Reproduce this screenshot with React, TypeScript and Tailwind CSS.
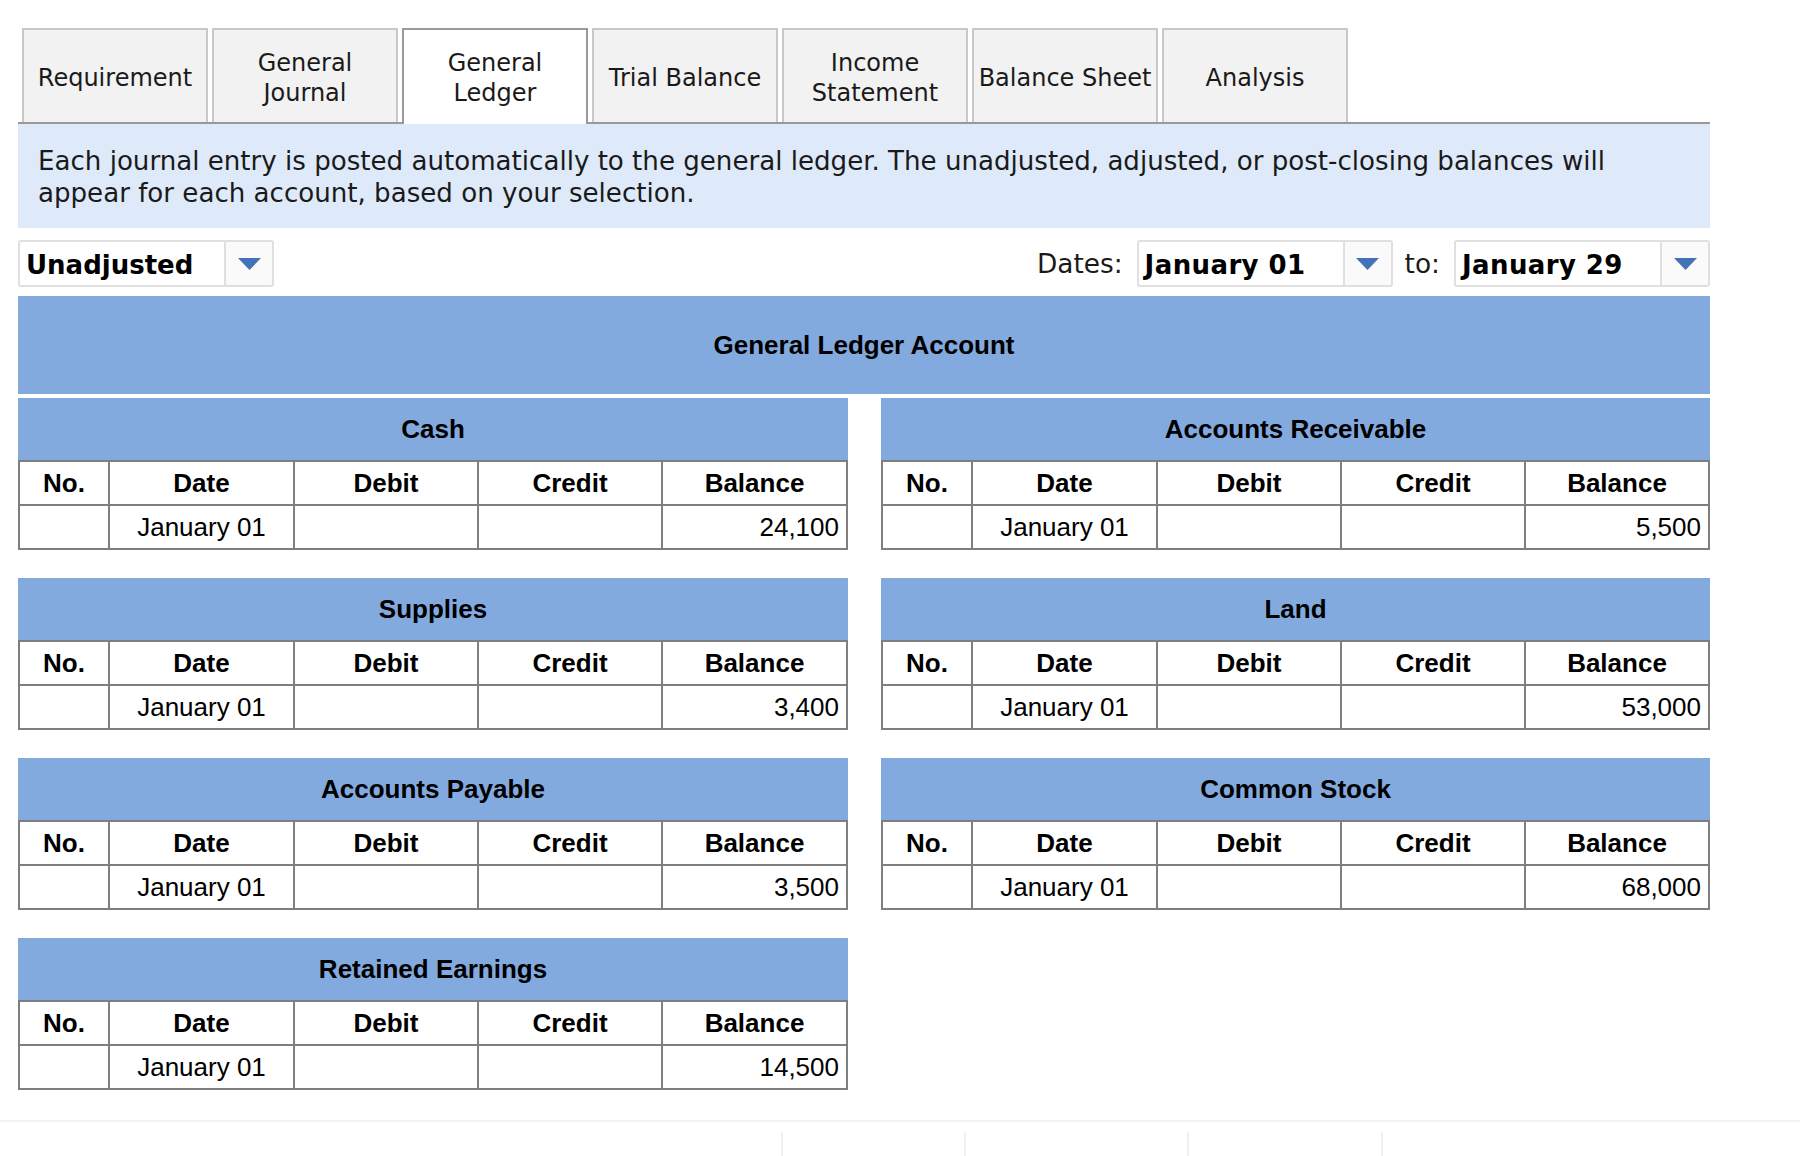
const tabs = [
  ["Requirement"],
  ["General", "Journal"],
  ["General", "Ledger"],
  ["Trial Balance"],
  ["Income", "Statement"],
  ["Balance Sheet"],
  ["Analysis"],
];

const accounts = [
  { name: "Cash", balance: "24,100" },
  { name: "Accounts Receivable", balance: "5,500" },
  { name: "Supplies", balance: "3,400" },
  { name: "Land", balance: "53,000" },
  { name: "Accounts Payable", balance: "3,500" },
  { name: "Common Stock", balance: "68,000" },
  { name: "Retained Earnings", balance: "14,500" },
];

function Dropdown({ value, textClass }: { value: string; textClass?: string }) {
  return (
    <div className="flex h-[47px] w-[256px] rounded-[3px] border-2 border-[#e0e0e0]">
      <div className={`flex-1 pl-[6px] text-[26px] leading-[47px] font-bold text-black ${textClass ?? ""}`}>{value}</div>
      <div className="flex w-[48px] items-center justify-center border-l-2 border-[#e0e0e0] bg-[#fafafa]">
        <svg width="23" height="12" viewBox="0 0 23 12">
          <polygon points="0,0 23,0 11.5,12" fill="#4472b8" />
        </svg>
      </div>
    </div>
  );
}

function LedgerTable({ name, balance }: { name: string; balance: string }) {
  const head = "border-2 border-[#7f7f7f] h-[44px] p-0 text-center font-bold";
  const cell = "border-2 border-[#7f7f7f] h-[44px] p-0";
  return (
    <div className="font-['Liberation_Sans',Arial,sans-serif] text-[26px] text-black">
      <div className="flex h-[62px] items-center justify-center bg-[#83aadf] font-bold">{name}</div>
      <table className="w-full table-fixed border-collapse">
        <colgroup>
          <col className="w-[90px]" />
          <col className="w-[185px]" />
          <col className="w-[184px]" />
          <col className="w-[184px]" />
          <col />
        </colgroup>
        <thead>
          <tr>
            <th className={head}>No.</th>
            <th className={head}>Date</th>
            <th className={head}>Debit</th>
            <th className={head}>Credit</th>
            <th className={head}>Balance</th>
          </tr>
        </thead>
        <tbody>
          <tr>
            <td className={cell}></td>
            <td className={`${cell} text-center`}>January 01</td>
            <td className={cell}></td>
            <td className={cell}></td>
            <td className={`${cell} pr-[7px] text-right`}>{balance}</td>
          </tr>
        </tbody>
      </table>
    </div>
  );
}

export default function App() {
  return (
    <div className="h-[1156px] overflow-hidden bg-white pt-[28px] font-['DejaVu_Sans',Verdana,sans-serif] text-[#1a1a1a]">
      <div className="ml-[18px] w-[1692px]">
        {/* Tabs */}
        <div className="flex h-[96px] gap-[4px] border-b-2 border-[#999999] pl-[4px]">
          {tabs.map((lines, i) => (
            <div
              key={i}
              className={
                i === 2
                  ? "relative z-10 -mb-[2px] flex h-[96px] w-[186px] flex-col items-center justify-center border-2 border-b-0 border-[#999999] bg-white pt-[3px] pb-[2px] text-[24px] leading-[30px]"
                  : "flex h-[94px] w-[186px] flex-col items-center justify-center border-2 border-b-0 border-[#c8c8c8] bg-[#f2f2f2] pt-[3px] text-[24px] leading-[30px]"
              }
            >
              {lines.map((l) => (
                <span key={l} className="whitespace-nowrap">{l}</span>
              ))}
            </div>
          ))}
        </div>

        {/* Info box */}
        <div className="h-[104px] bg-[#deeaf9] px-[20px] pt-[21px] text-[26.1px] leading-[32px]">
          Each journal entry is posted automatically to the general ledger. The unadjusted, adjusted, or post-closing balances will appear for each account, based on your selection.
        </div>

        {/* Selectors */}
        <div className="mt-[12px] flex items-center">
          <Dropdown value="Unadjusted" />
          <div className="ml-auto mr-[14px] text-[26.4px]">Dates:</div>
          <Dropdown value="January 01" textClass="tracking-[0.4px]" />
          <div className="ml-[12px] mr-[14px] text-[26.4px]">to:</div>
          <Dropdown value="January 29" textClass="tracking-[0.4px]" />
        </div>

        <div className="mt-[9px] flex h-[98px] items-center justify-center bg-[#83aadf] font-['Liberation_Sans',Arial,sans-serif] text-[26px] font-bold text-black">
          General Ledger Account
        </div>

        {/* Ledger accounts */}
        <div className="mt-[4px] grid grid-cols-[830px_829px] gap-x-[33px] gap-y-[28px]">
          {accounts.map((a) => (
            <LedgerTable key={a.name} name={a.name} balance={a.balance} />
          ))}
        </div>
      </div>

      {/* Cut-off footer */}
      <div className="mt-[30px] flex h-[36px] border-t-2 border-[#f2f2f2] pt-[10px]">
        <div className="ml-[781px] h-full w-[183px] border-l-2 border-[#f0f0f0]"></div>
        <div className="h-full w-[223px] border-l-2 border-[#f0f0f0]"></div>
        <div className="h-full w-[194px] border-l-2 border-[#f0f0f0]"></div>
        <div className="h-full w-[10px] border-l-2 border-[#f0f0f0]"></div>
      </div>
    </div>
  );
}
